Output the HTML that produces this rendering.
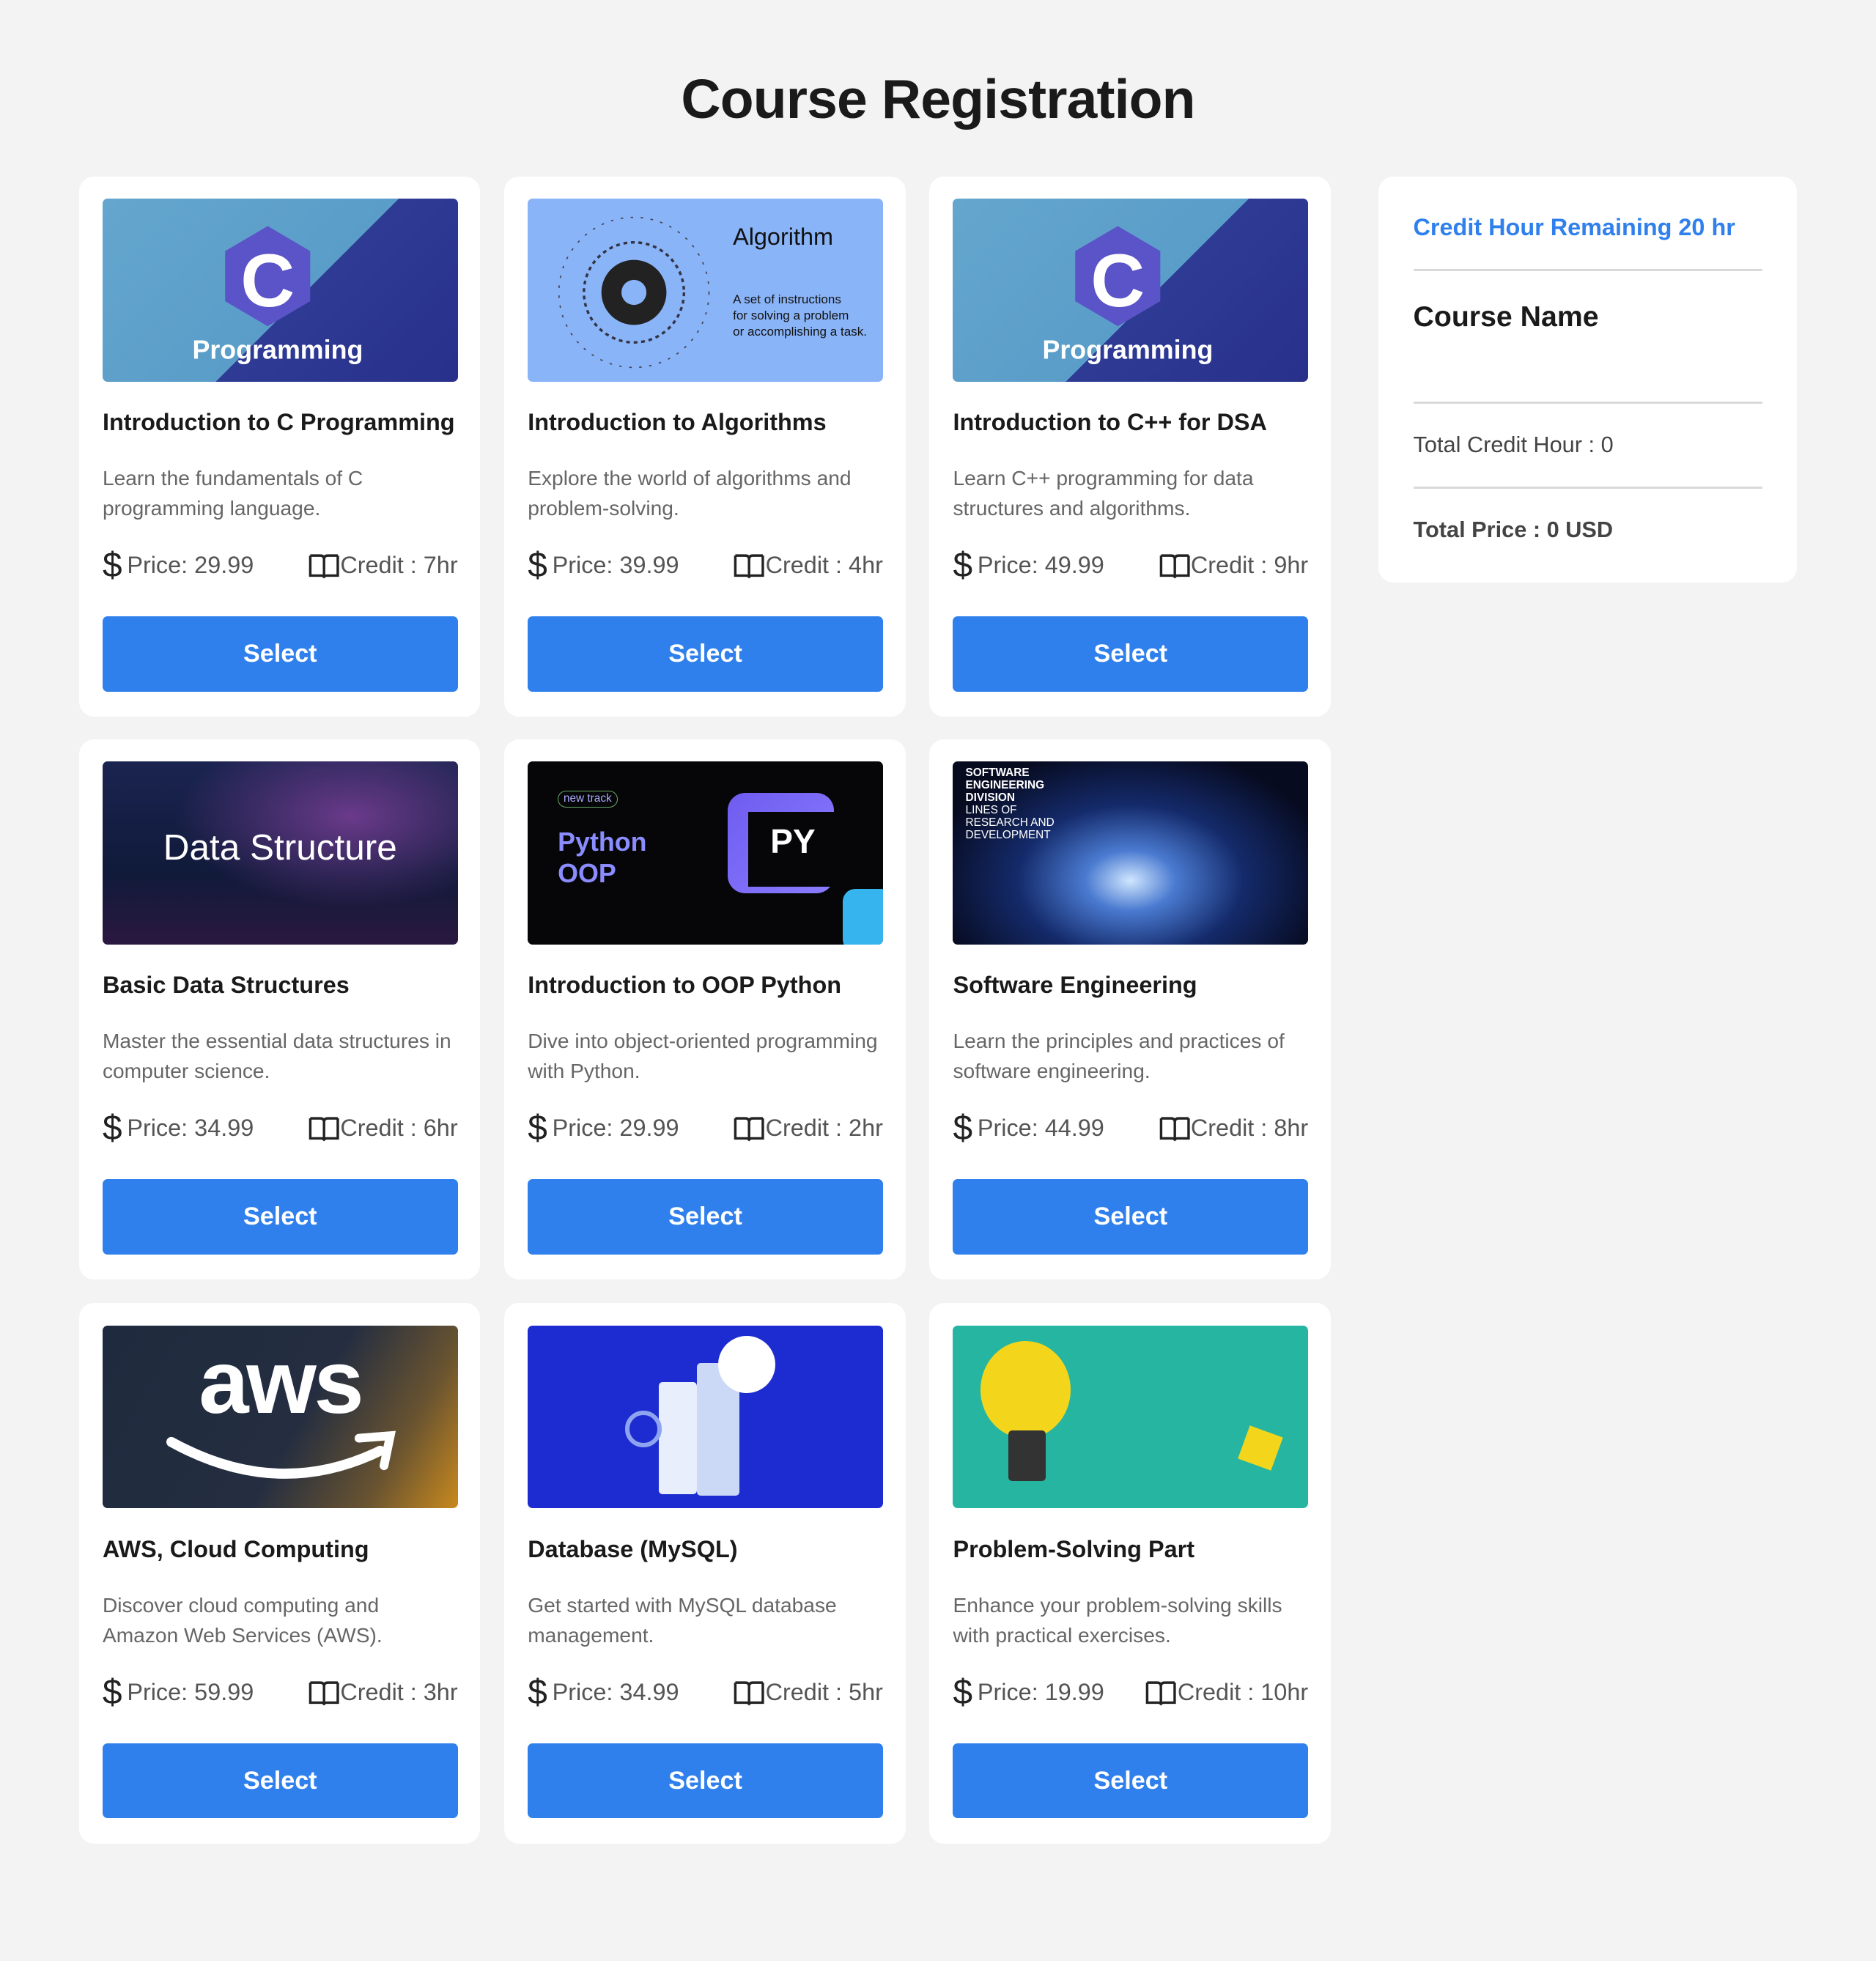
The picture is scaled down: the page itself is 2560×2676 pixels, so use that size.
<!DOCTYPE html>
<html><head><meta charset="utf-8"><style>
html,body{margin:0;padding:0;background:#f3f3f3;}
body{width:1500px;height:1568px;zoom:1.706667;font-family:"Liberation Sans",sans-serif;position:relative;color:#1a1a1a;overflow:hidden}
h1{position:absolute;top:54px;left:0;width:1500px;text-align:center;margin:0;font-size:44px;font-weight:bold;color:#1a1a1a;letter-spacing:-0.5px}
.card{position:absolute;width:321px;height:432px;background:#fff;border-radius:12px}
.img{position:absolute;left:19px;top:18px;width:284px;height:146px;border-radius:4px;overflow:hidden}
.t{position:absolute;left:19px;top:186px;font-size:19px;font-weight:bold;color:#1a1a1a;white-space:nowrap}
.d{position:absolute;left:19px;top:230px;width:280px;font-size:16.5px;line-height:24px;color:#666}
.p{position:absolute;left:19px;top:295px;width:284px;font-size:19px;color:#555;display:flex;justify-content:space-between;align-items:center}
.p span{display:flex;align-items:center}
.b{position:absolute;left:19px;top:352px;width:284px;height:60px;background:#2f80ed;border-radius:4px;color:#fff;font-size:20px;font-weight:bold;text-align:center;line-height:60px}
.side{position:absolute;left:1102px;top:141px;width:335px;height:325px;background:#fff;border-radius:12px}
.side div{position:absolute;left:28px;white-space:nowrap}
.hr{position:absolute;left:28px;width:279px;height:2px;background:#d9d9d9}
.cimg{background:linear-gradient(135deg,#64a6cd 0%,#5a9dc9 55%,#2e3b95 55%,#28308a 100%);}
.itxt{position:absolute;color:#fff;font-weight:bold}
</style></head><body>
<h1>Course Registration</h1>

<div class="card" style="left:63px;top:141px">
 <div class="img cimg"><svg width="284" height="146" style="position:absolute;left:0;top:0"><polygon points="132,22 166,42 166,82 132,102 98,82 98,42" fill="#5b53c8"/><text x="132" y="86" font-size="60" font-weight="bold" fill="#fff" text-anchor="middle" font-family="Liberation Sans">C</text><text x="140" y="128" font-size="21" font-weight="bold" fill="#fff" text-anchor="middle" font-family="Liberation Sans">Programming</text></svg></div>
 <div class="t">Introduction to C Programming</div>
 <div class="d">Learn the fundamentals of C programming language.</div>
 <div class="p"><span><b style="font-size:28px;font-weight:normal;color:#222;margin-right:4px">$</b>Price: 29.99</span><span><svg width="26" height="22" viewBox="0 0 26 22"><path d="M2 3h8c2 0 3 1 3 3v14M24 3h-8c-2 0-3 1-3 3M2 3v16h9c1 0 2 1 2 1s1-1 2-1h9V3" fill="none" stroke="#222" stroke-width="2"/></svg>Credit : 7hr</span></div>
 <div class="b">Select</div>
</div>
<div class="card" style="left:403px;top:141px">
 <div class="img" style="background:#8ab4f8"><svg width="284" height="146" style="position:absolute;left:0;top:0"><circle cx="85" cy="75" r="40" fill="none" stroke="#334" stroke-width="2" stroke-dasharray="3 3"/><circle cx="85" cy="75" r="26" fill="#222"/><circle cx="85" cy="75" r="10" fill="#8ab4f8"/><circle cx="85" cy="75" r="60" fill="none" stroke="#445" stroke-width="1" stroke-dasharray="2 6"/></svg><div style="position:absolute;left:164px;top:20px;font-size:19px;color:#111">Algorithm</div><div style="position:absolute;left:164px;top:74px;font-size:10px;line-height:13px;color:#111">A set of instructions<br>for solving a problem<br>or accomplishing a task.</div></div>
 <div class="t">Introduction to Algorithms</div>
 <div class="d">Explore the world of algorithms and problem-solving.</div>
 <div class="p"><span><b style="font-size:28px;font-weight:normal;color:#222;margin-right:4px">$</b>Price: 39.99</span><span><svg width="26" height="22" viewBox="0 0 26 22"><path d="M2 3h8c2 0 3 1 3 3v14M24 3h-8c-2 0-3 1-3 3M2 3v16h9c1 0 2 1 2 1s1-1 2-1h9V3" fill="none" stroke="#222" stroke-width="2"/></svg>Credit : 4hr</span></div>
 <div class="b">Select</div>
</div>
<div class="card" style="left:743px;top:141px">
 <div class="img cimg"><svg width="284" height="146" style="position:absolute;left:0;top:0"><polygon points="132,22 166,42 166,82 132,102 98,82 98,42" fill="#5b53c8"/><text x="132" y="86" font-size="60" font-weight="bold" fill="#fff" text-anchor="middle" font-family="Liberation Sans">C</text><text x="140" y="128" font-size="21" font-weight="bold" fill="#fff" text-anchor="middle" font-family="Liberation Sans">Programming</text></svg></div>
 <div class="t">Introduction to C++ for DSA</div>
 <div class="d">Learn C++ programming for data structures and algorithms.</div>
 <div class="p"><span><b style="font-size:28px;font-weight:normal;color:#222;margin-right:4px">$</b>Price: 49.99</span><span><svg width="26" height="22" viewBox="0 0 26 22"><path d="M2 3h8c2 0 3 1 3 3v14M24 3h-8c-2 0-3 1-3 3M2 3v16h9c1 0 2 1 2 1s1-1 2-1h9V3" fill="none" stroke="#222" stroke-width="2"/></svg>Credit : 9hr</span></div>
 <div class="b">Select</div>
</div>

<div class="card" style="left:63px;top:591px">
 <div class="img" style="background:radial-gradient(ellipse at 70% 30%,#6a3a8a,transparent 50%),linear-gradient(180deg,#1a2450,#101a3a 60%,#2a1840)"><div class="itxt" style="left:0;width:284px;text-align:center;top:52px;font-size:29px;font-weight:normal">Data Structure</div></div>
 <div class="t">Basic Data Structures</div>
 <div class="d">Master the essential data structures in computer science.</div>
 <div class="p"><span><b style="font-size:28px;font-weight:normal;color:#222;margin-right:4px">$</b>Price: 34.99</span><span><svg width="26" height="22" viewBox="0 0 26 22"><path d="M2 3h8c2 0 3 1 3 3v14M24 3h-8c-2 0-3 1-3 3M2 3v16h9c1 0 2 1 2 1s1-1 2-1h9V3" fill="none" stroke="#222" stroke-width="2"/></svg>Credit : 6hr</span></div>
 <div class="b">Select</div>
</div>
<div class="card" style="left:403px;top:591px">
 <div class="img" style="background:#060608"><div style="position:absolute;left:160px;top:25px;width:85px;height:80px;border-radius:14px;background:linear-gradient(135deg,#6f5cf0,#8a7cff)"></div><div style="position:absolute;left:176px;top:40px;width:110px;height:60px;background:#060608"></div><div class="itxt" style="left:194px;top:48px;font-size:27px">PY</div><div style="position:absolute;left:252px;top:102px;width:40px;height:50px;border-radius:10px;background:#35b4ee"></div><div class="itxt" style="left:24px;top:52px;font-size:21px;color:#8a8cff;line-height:25px">Python<br>OOP</div><div style="position:absolute;left:24px;top:23px;font-size:9px;color:#aaf;border:1px solid #6a6;border-radius:8px;padding:1px 4px">new track</div></div>
 <div class="t">Introduction to OOP Python</div>
 <div class="d">Dive into object-oriented programming with Python.</div>
 <div class="p"><span><b style="font-size:28px;font-weight:normal;color:#222;margin-right:4px">$</b>Price: 29.99</span><span><svg width="26" height="22" viewBox="0 0 26 22"><path d="M2 3h8c2 0 3 1 3 3v14M24 3h-8c-2 0-3 1-3 3M2 3v16h9c1 0 2 1 2 1s1-1 2-1h9V3" fill="none" stroke="#222" stroke-width="2"/></svg>Credit : 2hr</span></div>
 <div class="b">Select</div>
</div>
<div class="card" style="left:743px;top:591px">
 <div class="img" style="background:radial-gradient(ellipse at 50% 65%,#cfe6ff 0%,#4a7ad0 18%,#142a6a 45%,#070b20 80%)"><div style="position:absolute;left:10px;top:4px;font-size:9px;line-height:10px;color:#fff;font-weight:bold">SOFTWARE<br>ENGINEERING<br>DIVISION<br><span style="font-weight:normal">LINES OF<br>RESEARCH AND<br>DEVELOPMENT</span></div></div>
 <div class="t">Software Engineering</div>
 <div class="d">Learn the principles and practices of software engineering.</div>
 <div class="p"><span><b style="font-size:28px;font-weight:normal;color:#222;margin-right:4px">$</b>Price: 44.99</span><span><svg width="26" height="22" viewBox="0 0 26 22"><path d="M2 3h8c2 0 3 1 3 3v14M24 3h-8c-2 0-3 1-3 3M2 3v16h9c1 0 2 1 2 1s1-1 2-1h9V3" fill="none" stroke="#222" stroke-width="2"/></svg>Credit : 8hr</span></div>
 <div class="b">Select</div>
</div>

<div class="card" style="left:63px;top:1042px">
 <div class="img" style="background:linear-gradient(120deg,#1e2a3e 0%,#252e40 55%,#6a5430 80%,#c8891e 100%)"><div class="itxt" style="left:0;width:284px;text-align:center;top:4px;font-size:72px;letter-spacing:-2px">aws</div><svg width="284" height="146" style="position:absolute;left:0;top:0"><path d="M55 93 Q140 140 222 100" fill="none" stroke="#fff" stroke-width="8" stroke-linecap="round"/><path d="M205 90 L230 88 L225 112" fill="none" stroke="#fff" stroke-width="7" stroke-linecap="round"/></svg></div>
 <div class="t">AWS, Cloud Computing</div>
 <div class="d">Discover cloud computing and Amazon Web Services (AWS).</div>
 <div class="p"><span><b style="font-size:28px;font-weight:normal;color:#222;margin-right:4px">$</b>Price: 59.99</span><span><svg width="26" height="22" viewBox="0 0 26 22"><path d="M2 3h8c2 0 3 1 3 3v14M24 3h-8c-2 0-3 1-3 3M2 3v16h9c1 0 2 1 2 1s1-1 2-1h9V3" fill="none" stroke="#222" stroke-width="2"/></svg>Credit : 3hr</span></div>
 <div class="b">Select</div>
</div>
<div class="card" style="left:403px;top:1042px">
 <div class="img" style="background:#1c2cd0"><div style="position:absolute;left:105px;top:45px;width:30px;height:90px;background:#e8eefc;border-radius:3px"></div><div style="position:absolute;left:135px;top:30px;width:34px;height:106px;background:#cbd8f6;border-radius:3px"></div><div style="position:absolute;left:152px;top:8px;width:46px;height:46px;border-radius:50%;background:#fff"></div><div style="position:absolute;left:78px;top:68px;width:22px;height:22px;border-radius:50%;border:4px solid #8fa4f0"></div></div>
 <div class="t">Database (MySQL)</div>
 <div class="d">Get started with MySQL database management.</div>
 <div class="p"><span><b style="font-size:28px;font-weight:normal;color:#222;margin-right:4px">$</b>Price: 34.99</span><span><svg width="26" height="22" viewBox="0 0 26 22"><path d="M2 3h8c2 0 3 1 3 3v14M24 3h-8c-2 0-3 1-3 3M2 3v16h9c1 0 2 1 2 1s1-1 2-1h9V3" fill="none" stroke="#222" stroke-width="2"/></svg>Credit : 5hr</span></div>
 <div class="b">Select</div>
</div>
<div class="card" style="left:743px;top:1042px">
 <div class="img" style="background:#26b5a0"><div style="position:absolute;left:22px;top:12px;width:72px;height:78px;border-radius:50%;background:#f3d61c"></div><div style="position:absolute;left:44px;top:84px;width:30px;height:40px;background:#333;border-radius:3px"></div><div style="position:absolute;left:232px;top:84px;width:28px;height:28px;background:#f3d61c;transform:rotate(20deg)"></div></div>
 <div class="t">Problem-Solving Part</div>
 <div class="d">Enhance your problem-solving skills with practical exercises.</div>
 <div class="p"><span><b style="font-size:28px;font-weight:normal;color:#222;margin-right:4px">$</b>Price: 19.99</span><span><svg width="26" height="22" viewBox="0 0 26 22"><path d="M2 3h8c2 0 3 1 3 3v14M24 3h-8c-2 0-3 1-3 3M2 3v16h9c1 0 2 1 2 1s1-1 2-1h9V3" fill="none" stroke="#222" stroke-width="2"/></svg>Credit : 10hr</span></div>
 <div class="b">Select</div>
</div>

<div class="side">
 <div style="top:30px;font-size:19px;font-weight:bold;color:#2f80ed">Credit Hour Remaining 20 hr</div>
 <span class="hr" style="top:74px"></span>
 <div style="top:99px;font-size:23px;font-weight:bold;color:#1a1a1a">Course Name</div>
 <span class="hr" style="top:180px"></span>
 <div style="top:204px;font-size:18px;color:#444">Total Credit Hour : 0</div>
 <span class="hr" style="top:248px"></span>
 <div style="top:272px;font-size:18px;color:#444;font-weight:bold">Total Price : 0 USD</div>
</div>
</body></html>
